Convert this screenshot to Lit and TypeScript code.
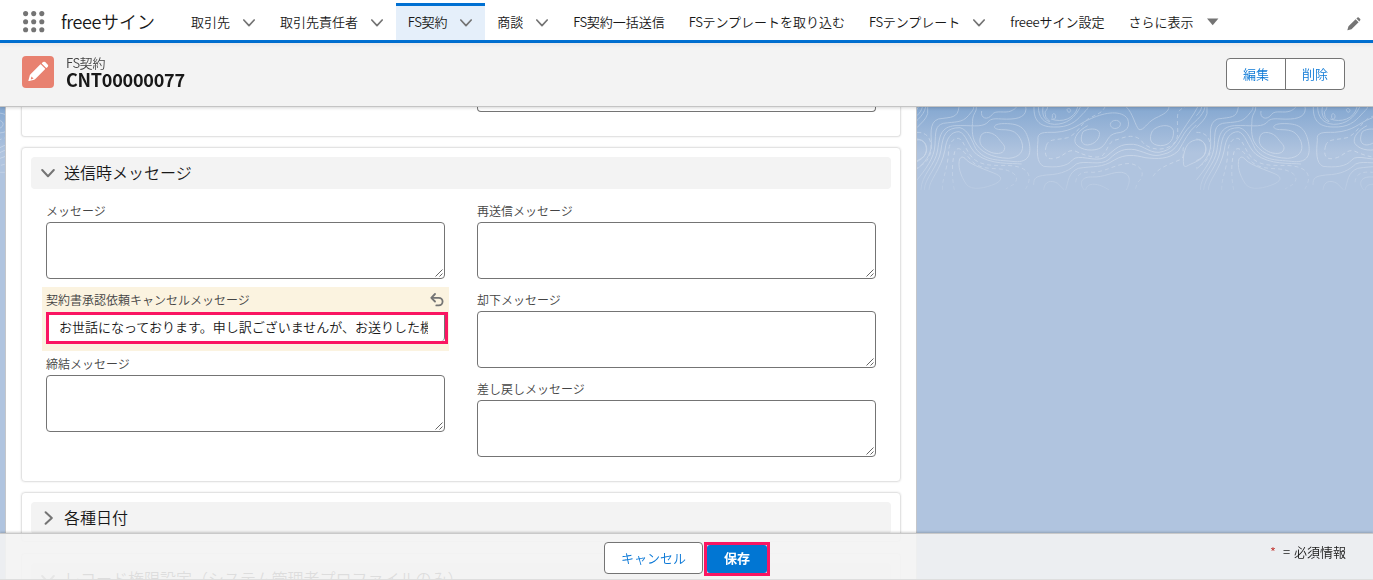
import { LitElement, html, svg, css, nothing } from "lit";
import { customElement, property } from "lit/decorators.js";

const chevron = html`<svg class="chev" viewBox="0 0 12 8" width="12" height="8"><path d="M.8 1 6 6.6 11.2 1" fill="none" stroke="#747474" stroke-width="1.7" stroke-linecap="round" stroke-linejoin="round"/></svg>`;

const solidLines = [
  "M36 98C50 82 62 75 68 56L68 36", "M36 62C44 54 50 46 52 36",
  "M36 222C58 205 78 180 79 150C80 125 70 82 100 72C140 66 158 70 162 36",
  "M36 255C60 225 88 190 90 150C92 110 90 92 115 85C150 80 172 84 190 62C202 48 206 44 206 36",
  "M48 285C48 240 92 210 98 165C104 120 108 96 150 92C200 90 225 98 245 85C256 72 262 70 290 72C330 74 362 70 363 42L362 36",
  "M58 285C58 250 100 215 108 165C114 120 122 98 165 98C190 104 202 140 212 160C240 200 280 194 330 200C370 202 380 180 372 140C362 96 342 84 290 86C260 88 262 104 290 104C325 104 338 112 350 140C360 170 342 188 310 190C260 188 225 172 208 138C198 112 203 90 203 72C205 54 216 50 214 36",
  "M72 285C72 255 108 225 120 165C124 130 138 110 162 110C185 116 188 155 215 178C255 210 320 204 350 207",
  "M230 48C225 70 248 78 262 58C272 44 300 56 318 48C330 42 332 40 334 36",
  "M228 122C235 105 268 112 280 130C290 145 306 153 296 168C288 180 260 176 246 166C226 154 220 140 228 122Z",
  "M164 192C158 212 165 240 184 268C200 288 240 280 272 266C294 254 292 244 266 234C225 218 190 205 180 190C172 184 168 186 164 192Z",
  "M36 132C56 134 66 148 65 164C63 184 50 190 36 197",
  "M387 36C386 70 398 96 446 96C492 98 512 80 530 60C540 48 548 44 550 36",
  "M400 36C400 65 416 86 448 88C486 88 510 68 526 36",
  "M414 36C410 62 420 76 434 80M428 36C424 54 418 44 421 58C422 74 432 72 434 80",
  "M442 62C442 54 450 54 452 62C453 72 446 76 442 68ZM486 44C488 38 496 40 497 46C496 54 488 54 486 44Z",
  "M438 72C470 84 510 72 518 36",
  "M399 136C395 110 418 112 450 112C510 108 520 85 560 70C600 52 650 44 668 72C676 94 666 112 635 114C605 120 610 142 588 158C568 170 528 168 512 146C502 128 524 104 548 92",
  "M534 110C548 100 578 98 583 112C586 130 570 148 548 150C528 150 524 132 534 110Z",
  "M616 88C618 74 640 72 646 84C650 102 618 108 616 88Z",
  "M664 36C684 54 690 92 702 104C718 106 724 84 750 70C780 56 790 50 792 36",
  "M742 108C756 90 798 84 805 106C808 128 798 152 766 152C736 150 730 132 742 108Z",
  "M399 136C396 170 394 204 416 214C450 218 486 216 502 195C520 174 570 204 600 187C624 170 638 148 672 148C710 144 728 174 762 172C804 166 814 138 832 108C848 82 866 60 878 36",
  "M386 270C386 248 392 244 424 240C475 238 495 224 514 207C540 194 586 215 612 193C640 165 660 160 690 164C730 174 742 188 774 178C818 170 824 130 846 104C864 82 894 66 900 36",
  "M482 285C490 260 490 232 520 220C568 212 590 220 628 195C660 176 690 180 720 188C758 192 790 194 820 168C838 138 850 110 874 90",
  "M416 285C418 258 438 254 458 265L478 285",
  "M538 285C520 264 530 244 562 246C600 247 620 230 650 232C682 238 674 264 664 285",
  "M542 285C546 260 582 264 612 285",
  "M836 210C832 184 840 146 862 138C890 126 904 145 902 168C896 196 870 200 850 211C842 216 838 216 836 210Z"
];

const dashedLines = [
  "M112 285C112 245 126 230 130 180C130 150 140 130 160 130C180 136 182 176 212 196C250 222 302 204 340 216C378 226 380 254 360 285",
  "M148 285C140 245 140 200 150 168C164 148 178 174 204 202C232 226 272 218 300 224C334 234 344 250 326 268L302 282",
  "M36 112C68 112 78 132 79 160C75 195 58 208 36 218",
  "M424 152C430 130 456 136 488 128C520 116 530 80 556 68C580 56 590 54 600 36",
  "M424 152C416 180 424 196 450 190C480 184 484 162 510 168C546 184 574 192 592 182C612 162 608 138 636 134C664 124 690 116 710 138C728 166 782 172 808 144C826 122 814 94 818 60C820 46 830 40 840 36",
  "M512 262C514 240 528 228 564 232C606 230 640 202 678 206C720 216 718 246 698 262L690 285",
  "M744 244C758 220 790 208 826 194C842 184 830 170 836 155"
];

@customElement("topo-backdrop")
class TopoBackdrop extends LitElement {
  static styles = css`
    :host { display: block; height: 473px; overflow: hidden; background: linear-gradient(#85a8d1 0, #b0c4df 46px, #b0c4df 100%); }
    svg { display: block; }
  `;
  render() {
    return html`<svg width="1373" height="90">
      <defs>
        <linearGradient id="fade" x1="0" y1="0" x2="0" y2="1"><stop offset="0" stop-color="#fff" stop-opacity=".3"/><stop offset=".6" stop-color="#fff" stop-opacity=".3"/><stop offset="1" stop-color="#fff" stop-opacity=".1"/></linearGradient>
        <mask id="m" maskUnits="userSpaceOnUse" x="0" y="0" width="1373" height="84"><rect width="1373" height="84" fill="url(#fade)"/></mask>
      </defs>
      <g mask="url(#m)">
        ${[-4, -3, -1, 0, 1].map(k => svg`<g transform="translate(${905 + k * 279.33} -12) scale(.33333)" fill="none" stroke="#fff" stroke-width="3">
          ${solidLines.map(d => svg`<path d=${d}/>`)}
          ${dashedLines.map(d => svg`<path d=${d} stroke-dasharray="12 9"/>`)}
        </g>`)}
      </g>
    </svg>`;
  }
}

@customElement("text-field")
class TextField extends LitElement {
  @property() label = "";
  static styles = css`
    :host { display: block; height: 89px; }
    .label { height: 20px; font-size: 12px; line-height: 18px; color: #444; white-space: nowrap; }
    .area { box-sizing: border-box; height: 57px; border: 1px solid #747474; border-radius: 4px; background: #fff; display: flex; justify-content: flex-end; align-items: flex-end; }
    svg { display: block; margin: 0 1px 1px 0; }
  `;
  render() {
    return html`<div class="label">${this.label}</div>
      <div class="area"><svg width="8" height="8" viewBox="0 0 8 8"><path d="M.5 7.5 7.5.5M4.5 7.5l3-3" stroke="#555" stroke-width=".9"/></svg></div>`;
  }
}

@customElement("section-title")
class SectionTitle extends LitElement {
  @property() label = "";
  @property({ type: Boolean }) closed = false;
  static styles = css`
    :host { display: flex; align-items: center; height: 32px; border-radius: 4px; background: #f3f3f3; font-size: 16px; line-height: 30px; color: #181818; white-space: nowrap; }
    .icon { width: 23px; padding-left: 10px; display: flex; align-items: center; }
    .closed { padding-left: 13px; width: 20px; }
    .text { height: 32px; }
    svg { display: block; }
  `;
  render() {
    return html`<span class="icon ${this.closed ? "closed" : ""}">${this.closed
      ? html`<svg width="10" height="14" viewBox="0 0 10 14"><path d="M1.6 1.2 7.8 7 1.6 12.8" fill="none" stroke="#747474" stroke-width="2" stroke-linecap="round" stroke-linejoin="round"/></svg>`
      : html`<svg width="14" height="10" viewBox="0 0 14 10"><path d="M1.2 2 7 8.2 12.8 2" fill="none" stroke="#747474" stroke-width="2" stroke-linecap="round" stroke-linejoin="round"/></svg>`}</span><span class="text">${this.label}</span>`;
  }
}

const tabs = [
  { label: "取引先", menu: true },
  { label: "取引先責任者", menu: true },
  { latin: "FS", label: "契約", menu: true, active: true },
  { label: "商談", menu: true },
  { latin: "FS", label: "契約一括送信" },
  { latin: "FS", label: "テンプレートを取り込む" },
  { latin: "FS", label: "テンプレート", menu: true },
  { latin: "freee", label: "サイン設定" }
];

@customElement("app-root")
class AppRoot extends LitElement {
  static styles = css`
    :host { display: flex; flex-direction: column; position: relative; width: 1373px; height: 580px; overflow: hidden; background: #b0c4df; font-family: "Noto Sans CJK JP", sans-serif; font-weight: 350; font-size: 13px; color: #181818; }
    * { box-sizing: border-box; }
    svg { display: block; flex: none; }
    .nav { flex: none; height: 43px; border-bottom: 3px solid #0070d2; background: #fff; display: flex; padding: 3px 12px 0 23px; white-space: nowrap; }
    .waffle { margin-top: 8px; }
    .app { width: 118px; margin-left: 16px; font-size: 18px; line-height: 36px; }
    .tab { display: flex; align-items: center; padding: 0 12px; line-height: 38px; height: 37px; }
    .tab .chev { margin: 2px 1px 0 12.9px; }
    .FS { letter-spacing: -.45px; }
    .freee { letter-spacing: -.2px; }
    .app .freee { letter-spacing: -.4px; }
    .active { background: #e5effa; border-top: 3px solid #0070d2; line-height: 32px; }
    .active > span { margin-top: -2px; }
    .active .chev { margin-top: -1px; }
    .tri { margin: 0 0 0 13px; }
    .pencil { margin: 14px 0 0 auto; }
    .head { position: relative; z-index: 1; flex: none; height: 64px; background: linear-gradient(#e9e8ea, #f3f3f3 5px); border-bottom: 1px solid #c4c4c4; box-shadow: 0 1px 3px rgba(0,0,0,.16); display: flex; padding: 13px 28px 0 22px; }
    .badge { width: 32px; height: 32px; border-radius: 4px; background: #e88170; }
    .names { margin: -2px auto 0 12px; }
    .kind { line-height: 18px; height: 16px; color: #444; }
    .number { font-size: 18px; font-weight: 700; line-height: 18px; letter-spacing: -.25px; }
    .group { display: flex; margin-top: 2px; width: 119px; height: 32px; border: 1px solid #747474; border-radius: 4px; background: #fff; color: #0b78d6; line-height: 29px; text-align: center; }
    .group span { flex: 1; }
    .group span + span { border-left: 1px solid #747474; }
    .stage { flex: 1; min-height: 0; display: grid; grid-template: 473px / 1373px; }
    .stage > * { grid-area: 1 / 1; }
    .panel { position: relative; margin-left: 5px; width: 912px; border: solid #c4c6ca; border-width: 0 1px; background: #fff; padding: 0 15px; display: flex; flex-direction: column; gap: 12px; overflow: hidden; }
    .card { flex: none; border-radius: 4px; border: 1px solid #e3e3e3; box-shadow: 0 0 2px rgba(0,0,0,.13); padding: 9px 9px 0; width: 880px; }
    .first { height: 30px; border-top: 0; border-radius: 0 0 4px 4px; padding: 0 24px; display: flex; justify-content: flex-end; }
    .tail { width: 399px; height: 5px; border: 1px solid #747474; border-top: 0; border-radius: 0 0 4px 4px; }
    .main { height: 335px; margin-top: -2px; }
    .dates { height: 50px; margin-top: -2px; }
    .access { margin-top: -1px; }
    .cols { display: grid; grid-template-columns: 399px 399px; column-gap: 32px; padding: 13px 15px; }
    .edited { height: 64px; margin: -4px -4px 0; background: #fbf3e0; padding: 4px 4px 0; }
    .edited + text-field { margin-top: 4px; }
    .row { display: flex; justify-content: space-between; height: 20px; font-size: 12px; line-height: 18px; color: #444; padding-right: 1px; }
    .row svg { margin-top: 2px; }
    .ring { width: 402px; height: 32px; margin-top: 1px; border: 3px solid #fa1562; background: #fff; display: flex; }
    .value { flex: none; width: 396px; border-right: 1px solid #747474; border-radius: 0 0 4px 0; padding: 0 16px 0 10px; line-height: 23px; }
    .clip { overflow: hidden; white-space: nowrap; height: 26px; }
    .foot { position: absolute; z-index: 2; left: 0; right: 0; bottom: 0; height: 47px; background: rgba(243,243,243,.9); border-top: 1px solid #c9c9c9; border-bottom: 1px solid #dedede; box-shadow: 0 -1px 2px rgba(0,0,0,.18); display: grid; grid-template-columns: 604px auto 1fr; padding: 8px 27px 0 0; }
    .actions { display: flex; gap: 1px; }
    .cancel { width: 99px; height: 32px; border: 1px solid #747474; border-radius: 4px; background: #fff; color: #0b78d6; line-height: 29px; text-align: center; }
    .save { width: 66px; height: 34px; border: 3px solid #fa1562; background: #f8c9d8; }
    .save span { display: block; height: 28px; border-radius: 3px; background: #0176d3; color: #fff; font-weight: 700; line-height: 25px; text-align: center; }
    .required { justify-self: end; line-height: 19px; word-spacing: 1px; }
    .required i { font-style: normal; color: #c23934; margin-right: 7px; }
  `;

  render() {
    return html`
      <div class="nav">
        <svg class="waffle" width="22" height="22">${[0, 1, 2].map(r => [0, 1, 2].map(c => svg`<circle cx=${2.6 + c * 8.1} cy=${2.6 + r * 8.1} r="2.55" fill="#747474"/>`))}</svg>
        <div class="app"><span class="freee">freee</span>サイン</div>
        ${tabs.map(t => html`<div class="tab ${t.active ? "active" : ""}"><span>${t.latin ? html`<span class=${t.latin}>${t.latin}</span>` : nothing}${t.label}</span>${t.menu ? chevron : nothing}</div>`)}
        <div class="tab"><span>さらに表示</span><svg class="tri" width="12" height="8"><path d="M0 .5H11.4L5.7 7.2Z" fill="#747474"/></svg></div>
        <svg class="pencil" width="14" height="14" viewBox="0 0 14 14" fill="#747474"><path d="M1.5 9.3 8.6 2.2l3 3L4.5 12.3.6 13.3Q.3 13.3.4 13ZM9.4 1.4 10.5.4Q11.1 0 11.7.5l1.5 1.5q.5.6 0 1.2L12.3 4.4Z"/></svg>
      </div>
      <div class="head">
        <svg class="badge" viewBox="0 0 32 32"><path d="M8.5 18.2 18.2 8.5q.4-.4.8 0l4 4q.4.4 0 .8L13.3 23.1q-.5.4-1 .6L7 25.1q-.8.1-.6-.6L7.9 19.1q.2-.5.6-.9ZM20 7.1l1-1q1.1-.9 2.2 0l2.6 2.6q.9 1 0 2.1l-1 1q-.4.3-.8 0l-4-4q-.4-.4 0-.7Z" fill="#fff"/><path d="m9.4 20.6 2.2 2-2.8.8Z" fill="#e88170"/></svg>
        <div class="names"><div class="kind"><span class="FS">FS</span>契約</div><div class="number">CNT00000077</div></div>
        <div class="group"><span>編集</span><span>削除</span></div>
      </div>
      <div class="stage">
        <topo-backdrop></topo-backdrop>
        <div class="panel">
          <div class="card first"><div class="tail"></div></div>
          <div class="card main">
            <section-title label="送信時メッセージ"></section-title>
            <div class="cols">
              <div>
                <text-field label="メッセージ"></text-field>
                <div class="edited">
                  <div class="row"><span>契約書承認依頼キャンセルメッセージ</span><svg width="14" height="14" viewBox="0 0 14 14"><path d="M2 4.8H8.8a3.8 3.8 0 0 1 0 7.6H6.3" fill="none" stroke="#747474" stroke-width="1.8" stroke-linecap="round"/><path d="M5 1 1.3 4.8 5 8.5" fill="none" stroke="#747474" stroke-width="1.8" stroke-linecap="round" stroke-linejoin="round"/></svg></div>
                  <div class="ring"><div class="value"><div class="clip">お世話になっております。申し訳ございませんが、お送りした機密</div></div></div>
                </div>
                <text-field label="締結メッセージ"></text-field>
              </div>
              <div>
                <text-field label="再送信メッセージ"></text-field>
                <text-field label="却下メッセージ"></text-field>
                <text-field label="差し戻しメッセージ"></text-field>
              </div>
            </div>
          </div>
          <div class="card dates"><section-title closed label="各種日付"></section-title></div>
          <div class="card access"><section-title label="レコード権限設定（システム管理者プロファイルのみ）"></section-title></div>
        </div>
      </div>
      <div class="foot">
        <span></span>
        <div class="actions"><div class="cancel">キャンセル</div><div class="save"><span>保存</span></div></div>
        <div class="required"><i>*</i>= 必須情報</div>
      </div>`;
  }
}
